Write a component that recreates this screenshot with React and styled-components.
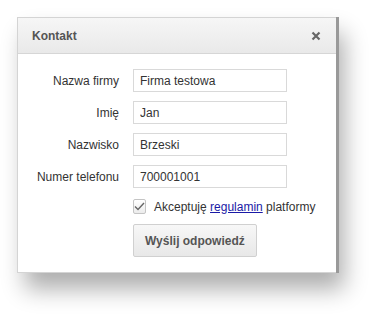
import React from 'react';
import styled, { createGlobalStyle } from 'styled-components';

const GlobalStyle = createGlobalStyle`
  html, body {
    margin: 0;
    background: #ffffff;
    font-family: "Liberation Sans", Arial, sans-serif;
  }
`;

const Page = styled.div`
  min-height: 321px;
  box-sizing: border-box;
  padding: 17px 0 0 17px;
`;

const Dialog = styled.div`
  width: 319px;
  background: #ffffff;
  border: 1px solid #d4d4d4;
  border-right: none;
  box-sizing: border-box;
  box-shadow: 3px 0 0 #999999, 8px 16px 22px rgba(0, 0, 0, 0.32);
`;

const Header = styled.div`
  height: 36px;
  display: flex;
  align-items: center;
  justify-content: space-between;
  padding: 0 15px 0 14px;
  background: linear-gradient(#f6f6f6, #e9e9e9);
  border-bottom: 1px solid #d6d6d6;
  box-sizing: border-box;
`;

const Title = styled.span`
  font-size: 12px;
  font-weight: bold;
  color: #555555;
`;

const Close = styled.span`
  display: flex;
  align-items: center;
`;

const Body = styled.div`
  padding: 15px 0 15px 0;
`;

const Form = styled.div`
  display: grid;
  grid-template-columns: 101px 154px;
  column-gap: 14px;
  row-gap: 9px;
  align-items: center;
`;

const Label = styled.label`
  font-size: 12px;
  color: #333333;
  text-align: right;
`;

const Input = styled.input`
  height: 23px;
  box-sizing: border-box;
  border: 1px solid #d9d9d9;
  padding: 0 6px;
  font-family: "Liberation Sans", Arial, sans-serif;
  font-size: 12px;
  color: #333333;
  outline: none;
`;

const CheckRow = styled.div`
  grid-column: 2 / span 1;
  display: flex;
  align-items: center;
  gap: 8px;
  margin-top: 2px;
  white-space: nowrap;
  font-size: 12px;
  color: #333333;
`;

const Box = styled.span`
  width: 17px;
  height: 15px;
  box-sizing: border-box;
  border: 1px solid #c4c4c4;
  border-radius: 2px;
  background: linear-gradient(#ffffff, #ececec);
  display: flex;
  align-items: center;
  justify-content: center;
`;

const Link = styled.a`
  color: #1a1aa6;
  text-decoration: underline;
`;

const Button = styled.button`
  grid-column: 2 / span 1;
  justify-self: start;
  margin-top: 1px;
  height: 33px;
  padding: 0 11px;
  font-family: "Liberation Sans", Arial, sans-serif;
  font-size: 12px;
  font-weight: bold;
  color: #555555;
  background: linear-gradient(#f7f7f7, #e8e8e8);
  border: 1px solid #d0d0d0;
  border-radius: 2px;
`;

const fields = [
  { label: 'Nazwa firmy', value: 'Firma testowa' },
  { label: 'Imię', value: 'Jan' },
  { label: 'Nazwisko', value: 'Brzeski' },
  { label: 'Numer telefonu', value: '700001001' },
];

const App = () => {
  return (
    <Page>
      <GlobalStyle />
      <Dialog>
        <Header>
          <Title>Kontakt</Title>
          <Close>
            <svg width="10" height="10" viewBox="0 0 10 10">
              <path d="M1.5 1.5 L8.5 8.5 M8.5 1.5 L1.5 8.5" stroke="#666" strokeWidth="2.2" />
            </svg>
          </Close>
        </Header>
        <Body>
          <Form>
            {fields.map((f, i) => (
              <React.Fragment key={i}>
                <Label>{f.label}</Label>
                <Input defaultValue={f.value} />
              </React.Fragment>
            ))}
            <CheckRow>
              <Box>
                <svg width="11" height="9" viewBox="0 0 11 9">
                  <path d="M1 4.5 L4 7.5 L10 1" fill="none" stroke="#666" strokeWidth="1.4" />
                </svg>
              </Box>
              <span>
                Akceptuję <Link href="#">regulamin</Link> platformy
              </span>
            </CheckRow>
            <Button>Wyślij odpowiedź</Button>
          </Form>
        </Body>
      </Dialog>
    </Page>
  );
};

export default App;
